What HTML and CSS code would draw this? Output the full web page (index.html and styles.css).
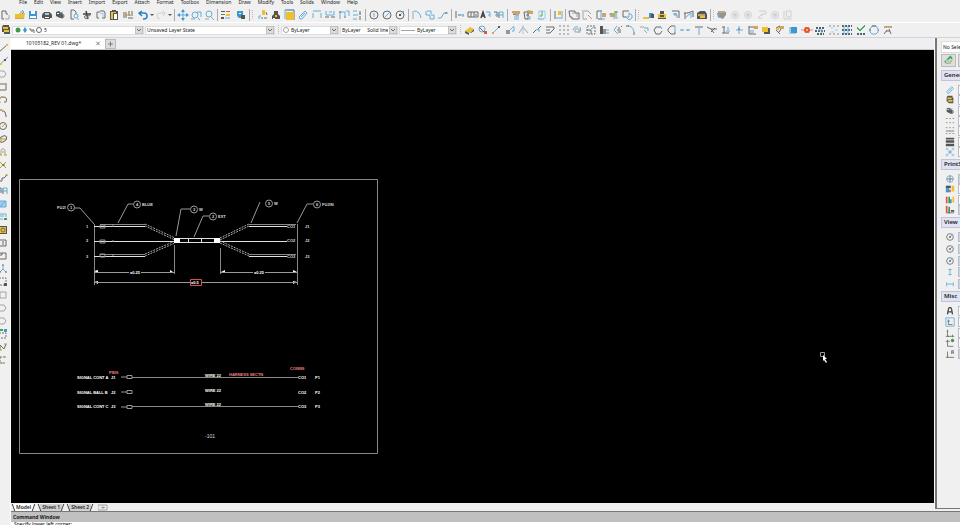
FILE: index.html
```html
<!DOCTYPE html>
<html lang="en">
<head>
<meta charset="utf-8">
<title>10105182_REV 01.dwg</title>
<link rel="stylesheet" href="styles.css">
</head>
<body>
<svg class="defs" aria-hidden="true">
<symbol id="new" viewBox="0 0 12 12"><path class="k" d="M6 2H2v8h2M6 2v3h2"/><path class="g" d="M9 6v4H5"/></symbol>
<symbol id="open" viewBox="0 0 12 12"><path class="fy" d="M1 5h4l1-1h5l-1 6H1z"/><path class="fo" d="M1 9h9v1H1z"/><path class="b" d="M6 3h3M8 1l2 2-2 2"/></symbol>
<symbol id="save" viewBox="0 0 12 12"><path class="fb" d="M2 2h8v8H2z"/><path class="fw" d="M4 2h4v3H4zM3 7h6v2H3z"/></symbol>
<symbol id="print" viewBox="0 0 12 12"><path class="fk" d="M3 3h6v1h1l1 2v3H9v1H3V9H1V6l1-2h1z"/><path class="fl" d="M4 4h4v2H4z"/><path class="fw" d="M4 8h4v1H4z"/></symbol>
<symbol id="preview" viewBox="0 0 12 12"><path class="fk" d="M2 3l3-1 4 3v4H6L2 7z"/><path class="fw" d="M3 4h2v1H3z"/><circle class="k" cx="8" cy="7" r="2"/><path class="b" d="M6 4l3-1"/></symbol>
<symbol id="pagefind" viewBox="0 0 12 12"><path class="k" d="M6 10H3V1h3l2 2v2"/><circle class="b" cx="8" cy="7" r="2"/><path class="g" d="M9 9l2 2"/></symbol>
<symbol id="cut" viewBox="0 0 12 12"><path class="k2" d="M2 5h8M5 2l2 8"/><circle class="k" cx="5" cy="8" r="1.500"/><circle class="k" cx="8" cy="6" r="1"/></symbol>
<symbol id="copy" viewBox="0 0 12 12"><path class="k" d="M4 9H2V3h3M5 2h4l1 2v5H7"/><path class="l" d="M5 5l3-1v4"/></symbol>
<symbol id="paste" viewBox="0 0 12 12"><path class="fk" d="M2 2h8v9H2z"/><path class="fy" d="M3 3h5v1H3zM3 4h2v6H3z"/><path class="fw" d="M6 5h3v5H6z"/><path class="fk" d="M4 1h4v2H4z"/></symbol>
<symbol id="match" viewBox="0 0 12 12"><path class="k" d="M2 3v6M4 3v6M6 9h5M7 2v5M10 2v5"/><path class="y" d="M3 6h6"/></symbol>
<symbol id="undo" viewBox="0 0 12 12"><path class="b2" d="M2 4h5q3 0 3 3t-3 3H6M5 2L2 4l3 3"/></symbol>
<symbol id="redo" viewBox="0 0 12 12"><path class="lg" d="M10 4H5Q2 4 2 7t3 3M8 2l2 2-2 3"/></symbol>
<symbol id="caret" viewBox="0 0 6 12"><path class="fk" d="M1 5h4L3 7z"/></symbol>
<symbol id="pan" viewBox="0 0 12 12"><path class="b" d="M2 6h8M6 2v8"/><path class="fb" d="M6 0l2 3H4zM6 12l2-3H4zM0 6l3-2v4zM12 6L9 4v4z"/></symbol>
<symbol id="zoomw" viewBox="0 0 12 12"><circle class="b" cx="5" cy="6" r="3"/><path class="b" d="M7 3h4v5M8 9l2 2"/><path class="g" d="M1 10h4"/></symbol>
<symbol id="zoom" viewBox="0 0 12 12"><circle class="b" cx="6" cy="5" r="3"/><path class="g" d="M8 8l3 3M2 10h4"/></symbol>
<symbol id="palette" viewBox="0 0 12 12"><path class="fk" d="M1 2h4v1H1zM1 8h3v2H1z"/><path class="fr" d="M6 2h4v1H6z"/><path class="fgn" d="M1 5h4v1H1z"/><path class="fy" d="M6 5h4v2H6z"/><path class="fl" d="M5 8h5v2H5z"/></symbol>
<symbol id="globe" viewBox="0 0 12 12"><path class="fb" d="M2 2h6v7H4L2 7z"/><path class="fk" d="M6 6h4v4H6z"/><path class="fw" d="M4 4h2v1H4z"/></symbol>
<symbol id="lamp" viewBox="0 0 12 12"><path class="fy" d="M5 1h3v5H5z"/><path class="b" d="M2 10V7h2"/><path class="k" d="M4 9h2M7 9h3M9 3l1 3"/></symbol>
<symbol id="eye" viewBox="0 0 12 12"><path class="fk" d="M4 2h4v3l2 2v3H2V7l2-2z"/><path class="fy" d="M5 6h2v2H5z"/><path class="fw" d="M3 9h2v1H3z"/></symbol>
<symbol id="note" viewBox="0 0 12 12"><path class="k" d="M1 1h9v10"/><path class="fy" d="M2 3h8v8H2z"/><path class="b" d="M1 1v9M3 1h7"/></symbol>
<symbol id="clip" viewBox="0 0 12 12"><path class="b" d="M2 8l6-6 2 2-5 6H3zM4 8l4-4"/></symbol>
<symbol id="dim1" viewBox="0 0 12 12"><path class="b" d="M2 2h8M2 4v5M10 4v5"/></symbol>
<symbol id="dim2" viewBox="0 0 12 12"><path class="b" d="M2 2v4h8V2M5 3h3"/><path class="k" d="M1 8h4M7 8h4"/></symbol>
<symbol id="dim3" viewBox="0 0 12 12"><path class="b" d="M2 10V3h5v4M8 2h3v5"/><path class="k" d="M1 3h2M6 8h2"/></symbol>
<symbol id="dim4" viewBox="0 0 12 12"><path class="b" d="M2 2h4M2 6h5M2 10h4"/><path class="k" d="M9 2v3M8 5h2M9 7v4"/></symbol>
<symbol id="circ" viewBox="0 0 12 12"><circle class="k" cx="6" cy="6" r="4"/><path class="b" d="M6 4v4"/></symbol>
<symbol id="diam" viewBox="0 0 12 12"><circle class="k" cx="6" cy="6" r="4"/><path class="b" d="M3 9l6-6"/></symbol>
<symbol id="rad" viewBox="0 0 12 12"><circle class="k" cx="6" cy="6" r="4"/><path class="b" d="M6 6l4-4"/><path class="fk" d="M5 5h2v2H5z"/></symbol>
<symbol id="arc" viewBox="0 0 12 12"><path class="b" d="M3 2q6 0 7 7"/><path class="g" d="M2 2v8"/></symbol>
<symbol id="leader" viewBox="0 0 12 12"><path class="b" d="M2 2v4h4v4h4V6H7M3 2h4v3"/></symbol>
<symbol id="curve" viewBox="0 0 12 12"><path class="b" d="M1 9h3l3-5h4"/><path class="k" d="M8 4h2"/></symbol>
<symbol id="step" viewBox="0 0 12 12"><path class="k" d="M2 9h3V6h2l3-3"/><path class="y" d="M8 3h3"/></symbol>
<symbol id="tol" viewBox="0 0 12 12"><path class="k" d="M2 2v7M4 6h3"/><path class="b" d="M7 6h3M9 5v3"/></symbol>
<symbol id="frame" viewBox="0 0 12 12"><path class="k" d="M1 3h10v5H1zM4 3v5M7 3v5M8 6h2"/></symbol>
<symbol id="atext" viewBox="0 0 12 12"><path class="k2" d="M1 9l2-6 2 6M2 7h3"/><path class="b" d="M6 3h4v5M8 6h2"/></symbol>
<symbol id="btext" viewBox="0 0 12 12"><path class="k" d="M1 3h3v5M6 3v6"/><path class="b" d="M6 3h4v6M2 6h8"/></symbol>
<symbol id="hand" viewBox="0 0 12 12"><path class="fo" d="M2 2h8v3H5L2 4z"/><path class="k" d="M3 5l3 1h3"/><path class="b" d="M4 8h5M4 10h5"/></symbol>
<symbol id="hand2" viewBox="0 0 12 12"><path class="fo" d="M4 1l6 1v3H6z"/><path class="k" d="M1 3h4v7H2zM3 6h3"/><path class="b" d="M7 7v3H4"/></symbol>
<symbol id="green" viewBox="0 0 12 12"><path class="l" d="M3 10V2h6v8"/><path class="gn" d="M6 2v5H4"/><path class="b" d="M2 10h6"/></symbol>
<symbol id="updown" viewBox="0 0 12 12"><path class="k" d="M2 2v8"/><path class="b" d="M3 9h5M9 2v8"/><path class="fy" d="M5 2h3v4H5z"/></symbol>
<symbol id="block" viewBox="0 0 12 12"><path class="k" d="M1 2h6v2h4v6H4V8H2z"/><path class="g" d="M4 4h5v4"/></symbol>
<symbol id="blockr" viewBox="0 0 12 12"><path class="g" d="M1 2h6l3 3M2 3v7h4"/><path class="r" d="M7 6l4 4"/></symbol>
<symbol id="blocky" viewBox="0 0 12 12"><path class="k" d="M2 10V2h5M3 10h4"/><path class="fo" d="M7 4h4v4H7z"/><path class="b" d="M6 1v9h4"/></symbol>
<symbol id="blockg" viewBox="0 0 12 12"><path class="fo" d="M2 4h5v4H2z"/><path class="b" d="M1 5h3M5 9h5"/><path class="gn" d="M8 2v6M6 3h4"/></symbol>
<symbol id="blockb" viewBox="0 0 12 12"><path class="k" d="M2 2h6M2 2v6h3"/><path class="b" d="M8 4v4H5l3 3 3-2V6z"/></symbol>
<symbol id="base" viewBox="0 0 12 12"><path class="fb" d="M6 4h4v5H6z"/><path class="fk" d="M8 5h3v4H8z"/><path class="fy" d="M0 8h6v2H0z"/></symbol>
<symbol id="box3" viewBox="0 0 12 12"><path class="fk" d="M4 2h4v3H4zM2 9h8v1H2z"/><path class="fy" d="M2 5h8v4H2z"/><path class="fk" d="M4 6h4v2H4z"/></symbol>
<symbol id="view2" viewBox="0 0 12 12"><path class="k" d="M2 2h7v7M4 5h3"/><path class="b" d="M4 4v2h3v3"/></symbol>
<symbol id="view3" viewBox="0 0 12 12"><path class="k" d="M2 10V4M1 4h4l5-2v6"/><path class="b" d="M3 8l5-4v5"/></symbol>
<symbol id="solid" viewBox="0 0 12 12"><path class="fk" d="M1 4l3-2h5l2 3v5H1z"/><path class="fo" d="M2 5h7v2H2z"/><path class="fy" d="M4 7h5v2H4z"/></symbol>
<symbol id="cube" viewBox="0 0 12 12"><path class="fg" d="M1 4l4-2 5 1v3l-3 4-5-2z"/><path class="fo" d="M2 2h7v2H2z"/><path class="b" d="M3 5v4"/></symbol>
<symbol id="gdot" viewBox="0 0 12 12"><circle class="lg" cx="6" cy="6" r="3.500"/><circle class="flg" cx="6" cy="6" r="2"/></symbol>
<symbol id="ghand" viewBox="0 0 12 12"><path class="lg" d="M3 2h7v3H6L2 9h4M6 5v2"/></symbol>
<symbol id="gpage" viewBox="0 0 12 12"><path class="lg" d="M2 2v8h8M4 2h5v6H5z"/></symbol>
<symbol id="layer" viewBox="0 0 12 12"><path class="fk" d="M3 1h6v2h1v7H4V8H2V3z"/><path class="fy" d="M3 3h5v2H3zM4 6h5v2H4z"/></symbol>
<symbol id="drop" viewBox="0 0 8 8"><path class="fs" d="M0 0h8v8H0z"/><path class="k" d="M2 3l2 2 2-2"/></symbol>
<symbol id="lights" viewBox="0 0 30 8"><circle class="fgn" cx="5" cy="4" r="2.500"/><path class="fb" d="M12 1l2 3-2 3-2-3z"/><path class="k" d="M17 2v2h4v3M19 4v2"/><circle class="k" cx="26" cy="4" r="2.500"/></symbol>
<symbol id="ring" viewBox="0 0 8 8"><circle class="g" cx="4" cy="4" r="2.500"/></symbol>
<symbol id="rule" viewBox="0 0 16 8"><path class="g" d="M1 4.500h14"/></symbol>
<symbol id="eraser" viewBox="0 0 12 12"><path class="fy" d="M2 7l5-4 4 2-5 4z"/><path class="fk" d="M2 7l4 2v2L2 9zM7 9l4-4v2L8 9z"/></symbol>
<symbol id="cpyred" viewBox="0 0 12 12"><circle class="b" cx="5" cy="5" r="3"/><path class="k" d="M2 3l5 5"/><path class="fr" d="M7 7h3v3H7z"/></symbol>
<symbol id="line" viewBox="0 0 12 12"><path class="b" d="M3 9l6-6"/><path class="fk" d="M8 2h2v2H8z"/><path class="fo" d="M2 8h2v2H2z"/></symbol>
<symbol id="mov" viewBox="0 0 12 12"><path class="fg" d="M2 6h4v4H2z"/><path class="b" d="M6 6l4-4M8 7h2V3"/></symbol>
<symbol id="mir" viewBox="0 0 12 12"><path class="g" d="M2 9l4-6 5 6"/><path class="l" d="M6 1v9"/></symbol>
<symbol id="str" viewBox="0 0 12 12"><path class="k" d="M2 9l3-3M7 5l3-3"/><path class="b" d="M5 6l3-1v3"/></symbol>
<symbol id="off" viewBox="0 0 12 12"><path class="k" d="M2 3h8v2L6 9H2M2 6h4"/></symbol>
<symbol id="grid" viewBox="0 0 12 12"><path class="d" d="M1 2h11M1 6h11M1 10h11"/></symbol>
<symbol id="rot" viewBox="0 0 12 12"><path class="b" d="M2 6q1-4 5-3M9 3q2 3-1 6"/><path class="g" d="M4 5h4v3H4z"/></symbol>
<symbol id="scale" viewBox="0 0 12 12"><path class="dk" d="M2 2h8v8H2V3"/><path class="k" d="M2 6h4v4"/><path class="b" d="M6 5l3-2"/></symbol>
<symbol id="align" viewBox="0 0 12 12"><path class="fk" d="M2 2h3v8H2z"/><path class="fg" d="M5 5h3v5H5z"/><path class="b" d="M8 6h3M8 9h3"/></symbol>
<symbol id="expl" viewBox="0 0 12 12"><path class="b" d="M5 2L2 6l4 4"/><path class="k" d="M6 4h2M5 6h4M6 8h3M9 3l1-1"/></symbol>
<symbol id="fil" viewBox="0 0 12 12"><path class="b" d="M3 2q5 0 6 6"/><path class="k" d="M1 2h3M9 8v3"/></symbol>
<symbol id="fil2" viewBox="0 0 12 12"><path class="b" d="M5 4h4v3"/><path class="g" d="M1 3h4M8 9l-3-3"/></symbol>
<symbol id="cir2" viewBox="0 0 12 12"><path class="k" d="M9 3H4L2 6l2 4h4l2-3"/><path class="b" d="M8 2l2 3"/></symbol>
<symbol id="cir3" viewBox="0 0 12 12"><path class="k" d="M9 2H5L2 5v2l3 3h4V8"/><path class="b" d="M9 2v6"/></symbol>
<symbol id="brk" viewBox="0 0 12 12"><path class="b" d="M1 6h4M7 6h4M3 5v2M9 5v2"/></symbol>
<symbol id="tee" viewBox="0 0 12 12"><path class="k" d="M2 3h8"/><path class="b" d="M6 4v7"/></symbol>
<symbol id="trim" viewBox="0 0 12 12"><path class="k" d="M1 3l4 2h6M5 5l3 4M5 8l4-4"/></symbol>
<symbol id="tool" viewBox="0 0 12 12"><path class="k" d="M2 3h3M4 3v6M2 9h7"/><path class="b" d="M6 7h4M8 3v3"/></symbol>
<symbol id="plus4" viewBox="0 0 12 12"><path class="b" d="M3 6h7M6 2v8"/><path class="k" d="M5 5h2"/></symbol>
<symbol id="note2" viewBox="0 0 12 12"><path class="k" d="M2 2v8h7M2 3h4"/><path class="fo" d="M5 2h6v3H7z"/><path class="fl" d="M3 6h4v3H3z"/></symbol>
<symbol id="ysq" viewBox="0 0 12 12"><path class="fk" d="M4 4h6v6H4z"/><path class="fy" d="M2 3h6v5H2z"/></symbol>
<symbol id="swatch" viewBox="0 0 12 12"><path class="fo" d="M4 2h6v3H6z"/><path class="k" d="M2 4l4-2M2 6l4 4M7 5l-2 3"/><path class="fy" d="M2 4h3v2H2z"/></symbol>
<symbol id="bsq" viewBox="0 0 12 12"><path class="fl" d="M2 3h7v7H2z"/><path class="fb" d="M4 3h6v6H4z"/></symbol>
<symbol id="burst" viewBox="0 0 12 12"><path class="r" d="M0 6h12M4 3l4 6M8 3L4 9"/><circle class="fr" cx="6" cy="6" r="3"/><path class="fy" d="M5 5h2v2H5z"/></symbol>
<symbol id="cloud" viewBox="0 0 12 12"><path class="dk2" d="M2 4h8M1 7h10M3 10h7"/><path class="b" d="M4 6h4v3"/></symbol>
<symbol id="grid2" viewBox="0 0 12 12"><path class="d" d="M1 2h11M1 10h11"/><path class="l" d="M3 4h2M7 6h3M3 8h3"/></symbol>
<symbol id="grid3" viewBox="0 0 12 12"><path class="dk2" d="M1 2h10M1 6h10M1 10h10"/><path class="b" d="M3 2v8M7 2v8"/></symbol>
<symbol id="check" viewBox="0 0 12 12"><path class="gn" d="M2 3l3 3 5-5M2 4l3 3 5-5"/><path class="dk2" d="M2 10h9"/></symbol>
<symbol id="gear" viewBox="0 0 12 12"><path class="b" d="M4 2h4l2 3v3l-2 2H4L2 8V5z"/><path class="k" d="M4 2h4M1 6h2M10 6h1"/></symbol>
<symbol id="tick" viewBox="0 0 12 12"><path class="fo" d="M4 2h6v2H6z"/><path class="k" d="M2 3h3M5 6l-3 4M7 5l2 5M4 7h4"/></symbol>
<symbol id="dline" viewBox="0 0 12 12"><path class="k" d="M1 11l10-9"/><path class="fy" d="M1 9h2v2H1zM9 2h2v2H9z"/></symbol>
<symbol id="xline" viewBox="0 0 12 12"><path class="b" d="M1 11l10-9"/><path class="fk" d="M7 4h2v2H7z"/><path class="fy" d="M3 8h2v2H3z"/></symbol>
<symbol id="hex" viewBox="0 0 12 12"><path class="g" d="M3 3h4l2 3-2 3H3"/></symbol>
<symbol id="rect" viewBox="0 0 12 12"><path class="k" d="M2 3h7v6H2z"/><path class="fo" d="M8 2h2v2H8zM1 8h3v2H1z"/></symbol>
<symbol id="vp" viewBox="0 0 12 12"><path class="k" d="M2 3h7v6H2M5 3v2H3"/></symbol>
<symbol id="arc1" viewBox="0 0 12 12"><path class="k" d="M3 9q-2-6 3-6t3 5H7"/><path class="fo" d="M7 7h2v2H7zM4 2h2v2H4z"/></symbol>
<symbol id="arc2" viewBox="0 0 12 12"><path class="k" d="M2 3h3q4 1 4 6"/><path class="fo" d="M8 8h2v2H8zM5 3h2v2H5z"/></symbol>
<symbol id="ell" viewBox="0 0 12 12"><circle class="k" cx="6" cy="6" r="3.500"/><path class="y" d="M5 7l4-4"/></symbol>
<symbol id="leaf" viewBox="0 0 12 12"><ellipse class="k" cx="6" cy="6" rx="4" ry="2.500" transform="rotate(-35 6 6)"/><path class="y" d="M4 6h5M4 9V5"/></symbol>
<symbol id="spl" viewBox="0 0 12 12"><path class="g" d="M4 9V4q2-3 4 0v5"/><path class="y" d="M3 9h2M7 9h3M5 6h2"/></symbol>
<symbol id="xpt" viewBox="0 0 12 12"><path class="y" d="M3 3l6 6M9 3L3 9"/><path class="k" d="M5 6h3"/></symbol>
<symbol id="hatch" viewBox="0 0 12 12"><path class="fl" d="M1 3h8v6H1z"/><path class="b" d="M3 9l5-6M1 3h8v6H1z"/></symbol>
<symbol id="img" viewBox="0 0 12 12"><path class="b" d="M2 3h7v3M2 8h4M3 5h4"/><path class="gn2" d="M7 8h3"/></symbol>
<symbol id="reg" viewBox="0 0 12 12"><path class="fk" d="M1 2h9v8H1z"/><path class="fy" d="M2 3h7v6H2z"/><circle class="k" cx="6" cy="6" r="2"/></symbol>
<symbol id="lst" viewBox="0 0 12 12"><path class="k" d="M1 3h8v6H1M5 5h2M5 7h2"/></symbol>
<symbol id="tri" viewBox="0 0 12 12"><path class="b" d="M6 2v4L3 9M6 6l3 3"/><path class="k" d="M2 9h2M8 9h2M5 2h2"/></symbol>
<symbol id="dotsq" viewBox="0 0 12 12"><path class="dk" d="M2 2h7v7H2z"/><path class="fk" d="M7 7h3v3H7z"/></symbol>
<symbol id="snap" viewBox="0 0 12 12"><path class="dk" d="M3 3h6M3 9h6M3 3v6"/><path class="y" d="M7 3h2M4 9h2"/></symbol>
<symbol id="sq" viewBox="0 0 12 12"><path class="g" d="M3 3h6v6H3z"/></symbol>
<symbol id="cyl" viewBox="0 0 12 12"><path class="dk" d="M2 5h7v5H2z"/><path class="gn2" d="M3 2h3"/><path class="fb" d="M7 1h3v3H7z"/></symbol>
<symbol id="nn" viewBox="0 0 12 12"><path class="k" d="M3 9V4l4 4 2-5"/><path class="y" d="M3 9h2M7 3h3"/></symbol>
<symbol id="cad" viewBox="0 0 12 12"><path class="gn2" d="M2 8l6-6 2 2"/><path class="y" d="M3 9h5l2-4"/><path class="fl" d="M3 5h5v3H3z"/></symbol>
<symbol id="lt1" viewBox="0 0 12 12"><path class="d" d="M1 3h11M1 8h11"/></symbol>
<symbol id="lt2" viewBox="0 0 12 12"><path class="d" d="M1 2h11M1 9h11"/><path class="k" d="M1 6h10"/></symbol>
<symbol id="lt3" viewBox="0 0 12 12"><path class="fk" d="M1 1h10v2H1zM1 4h10v3H1zM1 8h10v3H1z"/></symbol>
<symbol id="chk" viewBox="0 0 12 12"><path class="fl" d="M1 1h3v3H1zM8 1h3v3H8zM4 4h4v4H4zM1 8h3v3H1zM8 8h3v3H8z"/><path class="fg" d="M5 5h2v2H5z"/></symbol>
<symbol id="globe2" viewBox="0 0 12 12"><circle class="b" cx="6" cy="6" r="4"/><path class="k" d="M2 6h8M6 2v8"/></symbol>
<symbol id="ps1" viewBox="0 0 12 12"><path class="fk" d="M1 2h6v3H1z"/><path class="fb" d="M1 5h4v5H1z"/><path class="fy" d="M8 2h3v7H8z"/><path class="fr" d="M5 7h2v3H5z"/></symbol>
<symbol id="ps3" viewBox="0 0 12 12"><path class="fr" d="M1 2h2v8H1z"/><path class="fgn" d="M4 2h2v8H4z"/><path class="fb" d="M6 5h2v5H6z"/><path class="fy" d="M9 2h2v7H9z"/></symbol>
<symbol id="ps2" viewBox="0 0 12 12"><path class="fr" d="M1 1h2v9H1z"/><path class="fgn" d="M4 2h2v8H4z"/><path class="fk" d="M7 6h4v2H7zM3 9h8v1H3z"/></symbol>
<symbol id="tv" viewBox="0 0 12 12"><path class="b" d="M4 3h4M6 2v8M4 9h4"/></symbol>
<symbol id="th" viewBox="0 0 12 12"><path class="b" d="M2 4v5M2 6h8M10 4v5"/></symbol>
<symbol id="abold" viewBox="0 0 12 12"><path class="k2" d="M3 10l1-6 1-2h2l1 2 1 6M4 7h4"/></symbol>
<symbol id="ucs" viewBox="0 0 12 12"><path class="k" d="M3 2v8h8M1 10h4M2 4h2M9 8v3"/></symbol>
<symbol id="ucsb" viewBox="0 0 12 12"><path class="b" d="M1 1h10v10H1z"/><path class="k" d="M4 3v6h5M3 5h3"/></symbol>
<symbol id="ucsg" viewBox="0 0 12 12"><path class="k" d="M3 2v8h7M1 4h5"/><circle class="fgn" cx="9" cy="3" r="2"/></symbol>
<symbol id="ucsa" viewBox="0 0 12 12"><path class="k" d="M3 3v7h8M1 10h3M8 6V2h2v4M8 4h2"/></symbol>
</svg>

<nav class="menu">
<a href="#">File</a><a href="#">Edit</a><a href="#">View</a><a href="#">Insert</a><a href="#">Import</a><a href="#">Export</a><a href="#">Attach</a><a href="#">Format</a><a href="#">Toolbox</a><a href="#">Dimension</a><a href="#">Draw</a><a href="#">Modify</a><a href="#">Tools</a><a href="#">Solids</a><a href="#">Window</a><a href="#">Help</a>
</nav>

<div class="bar">
<div class="group g-file"><button aria-label="New"><svg><use href="#new"/></svg></button><button aria-label="Open"><svg><use href="#open"/></svg></button><button aria-label="Save"><svg><use href="#save"/></svg></button><button aria-label="Print"><svg><use href="#print"/></svg></button><button aria-label="Preview"><svg><use href="#preview"/></svg></button><button aria-label="Find"><svg><use href="#pagefind"/></svg></button><button aria-label="Cut"><svg><use href="#cut"/></svg></button><button aria-label="Copy"><svg><use href="#copy"/></svg></button><button aria-label="Paste"><svg><use href="#paste"/></svg></button><button aria-label="Match properties"><svg><use href="#match"/></svg></button></div>
<div class="group sep g-undo"><button aria-label="Undo"><svg><use href="#undo"/></svg></button><button class="slim" aria-label="Undo list"><svg><use href="#caret"/></svg></button><button aria-label="Redo"><svg><use href="#redo"/></svg></button><button class="slim" aria-label="Redo list"><svg><use href="#caret"/></svg></button></div>
<div class="group sep g-three"><button aria-label="Pan"><svg><use href="#pan"/></svg></button><button aria-label="Zoom window"><svg><use href="#zoomw"/></svg></button><button aria-label="Zoom"><svg><use href="#zoom"/></svg></button></div>
<div class="group sep g-two"><button aria-label="Palettes"><svg><use href="#palette"/></svg></button><button aria-label="Web"><svg><use href="#globe"/></svg></button></div>
<i class="grip"></i>
<div class="group sep g-eight"><button aria-label="Light"><svg><use href="#lamp"/></svg></button><button aria-label="Observe"><svg><use href="#eye"/></svg></button><button aria-label="Note"><svg><use href="#note"/></svg></button><button aria-label="Attach"><svg><use href="#clip"/></svg></button><button aria-label="Linear"><svg><use href="#dim1"/></svg></button><button aria-label="Continue"><svg><use href="#dim2"/></svg></button><button aria-label="Baseline"><svg><use href="#dim3"/></svg></button><button aria-label="Ordinate"><svg><use href="#dim4"/></svg></button></div>
<div class="group sep g-three"><button aria-label="Center"><svg><use href="#circ"/></svg></button><button aria-label="Diameter"><svg><use href="#diam"/></svg></button><button aria-label="Radius"><svg><use href="#rad"/></svg></button></div>
<div class="group sep g-three"><button aria-label="Angle"><svg><use href="#arc"/></svg></button><button aria-label="Jog"><svg><use href="#leader"/></svg></button><button aria-label="Leader"><svg><use href="#curve"/></svg></button></div>
<div class="group sep g-four"><button aria-label="Tolerance"><svg><use href="#tol"/></svg></button><button aria-label="Frame"><svg><use href="#frame"/></svg></button><button aria-label="Text"><svg><use href="#atext"/></svg></button><button aria-label="Edit text"><svg><use href="#btext"/></svg></button></div>
<div class="group sep g-three"><button aria-label="Style"><svg><use href="#hand"/></svg></button><button aria-label="Edit style"><svg><use href="#hand2"/></svg></button><button aria-label="Update"><svg><use href="#green"/></svg></button></div>
<div class="group sep g-one"><button aria-label="Override"><svg><use href="#updown"/></svg></button></div>
<div class="group sep g-five"><button aria-label="Block"><svg><use href="#block"/></svg></button><button aria-label="Detach"><svg><use href="#blockr"/></svg></button><button aria-label="Insert block"><svg><use href="#blocky"/></svg></button><button aria-label="Define block"><svg><use href="#blockg"/></svg></button><button aria-label="Edit block"><svg><use href="#blockb"/></svg></button></div>
<i class="grip"></i>
<div class="group sep g-five"><button aria-label="Base"><svg><use href="#base"/></svg></button><button aria-label="Box"><svg><use href="#box3"/></svg></button><button aria-label="Layout"><svg><use href="#view2"/></svg></button><button aria-label="Project"><svg><use href="#view3"/></svg></button><button aria-label="Solid"><svg><use href="#solid"/></svg></button></div>
<i class="grip"></i>
<div class="group g-six"><button aria-label="Cube"><svg><use href="#cube"/></svg></button><button aria-label="Record" disabled><svg><use href="#gdot"/></svg></button><button aria-label="Stop" disabled><svg><use href="#gdot"/></svg></button><button aria-label="Pick" disabled><svg><use href="#ghand"/></svg></button><button aria-label="Play" disabled><svg><use href="#gdot"/></svg></button><button aria-label="Sheet" disabled><svg><use href="#gpage"/></svg></button></div>
</div>

<div class="bar bar-two">
<button aria-label="Layers"><svg><use href="#layer"/></svg></button>
<label class="combo c-layer"><svg class="lights"><use href="#lights"/></svg><select aria-label="Layer"><option>5</option></select><svg class="drop"><use href="#drop"/></svg></label>
<label class="combo c-state"><select aria-label="Layer state"><option>Unsaved Layer State</option></select><svg class="drop"><use href="#drop"/></svg></label>
<i class="grip"></i>
<label class="combo c-prop"><svg class="ring"><use href="#ring"/></svg><select aria-label="Colour"><option>ByLayer</option></select><svg class="drop"><use href="#drop"/></svg></label>
<label class="combo c-prop"><select aria-label="Line style"><option>ByLayer&nbsp;&nbsp;&nbsp;&nbsp;&nbsp;Solid line</option></select><svg class="drop"><use href="#drop"/></svg></label>
<label class="combo c-prop"><svg class="rule"><use href="#rule"/></svg><select aria-label="Line weight"><option>ByLayer</option></select><svg class="drop"><use href="#drop"/></svg></label>
<i class="grip"></i>
<div class="group g-modify"><button aria-label="Erase"><svg><use href="#eraser"/></svg></button><button aria-label="Copy entity"><svg><use href="#cpyred"/></svg></button><button aria-label="Line"><svg><use href="#line"/></svg></button><button aria-label="Move"><svg><use href="#mov"/></svg></button><button aria-label="Mirror"><svg><use href="#mir"/></svg></button><button aria-label="Stretch"><svg><use href="#str"/></svg></button><button aria-label="Offset"><svg><use href="#off"/></svg></button><button aria-label="Pattern"><svg><use href="#grid"/></svg></button><button aria-label="Rotate"><svg><use href="#rot"/></svg></button><button aria-label="Scale"><svg><use href="#scale"/></svg></button><button aria-label="Align"><svg><use href="#align"/></svg></button><button aria-label="Explode"><svg><use href="#expl"/></svg></button><button aria-label="Fillet"><svg><use href="#fil"/></svg></button><button aria-label="Chamfer"><svg><use href="#fil2"/></svg></button><button aria-label="Close"><svg><use href="#cir2"/></svg></button><button aria-label="Join"><svg><use href="#cir3"/></svg></button><button aria-label="Split"><svg><use href="#brk"/></svg></button><button aria-label="Extend"><svg><use href="#tee"/></svg></button><button aria-label="Trim"><svg><use href="#trim"/></svg></button><button aria-label="Power trim"><svg><use href="#tool"/></svg></button><button aria-label="Weld"><svg><use href="#plus4"/></svg></button><button aria-label="Edit annotation"><svg><use href="#note2"/></svg></button><button aria-label="Order"><svg><use href="#ysq"/></svg></button><button aria-label="Edit hatch"><svg><use href="#swatch"/></svg></button><button aria-label="Front"><svg><use href="#bsq"/></svg></button><button aria-label="Burst"><svg><use href="#burst"/></svg></button><button aria-label="Group"><svg><use href="#cloud"/></svg></button><button aria-label="Ungroup"><svg><use href="#grid2"/></svg></button><button aria-label="Array"><svg><use href="#grid3"/></svg></button><button aria-label="Accept"><svg><use href="#check"/></svg></button><button aria-label="Regenerate"><svg><use href="#gear"/></svg></button><button aria-label="Edit polyline"><svg><use href="#tick"/></svg></button></div>
</div>

<div class="work">
<aside class="tools"><button aria-label="Line"><svg><use href="#dline"/></svg></button><button aria-label="Infinite line"><svg><use href="#xline"/></svg></button><button aria-label="Polygon"><svg><use href="#hex"/></svg></button><button aria-label="Rectangle"><svg><use href="#rect"/></svg></button><button aria-label="Arc"><svg><use href="#arc1"/></svg></button><button aria-label="Three point arc"><svg><use href="#arc2"/></svg></button><button aria-label="Circle"><svg><use href="#ell"/></svg></button><button aria-label="Ellipse"><svg><use href="#leaf"/></svg></button><button aria-label="Spline"><svg><use href="#spl"/></svg></button><button aria-label="Point"><svg><use href="#xpt"/></svg></button><button aria-label="Polyline"><svg><use href="#step"/></svg></button><button aria-label="Block"><svg><use href="#btext"/></svg></button><button aria-label="Hatch"><svg><use href="#hatch"/></svg></button><button aria-label="Image"><svg><use href="#img"/></svg></button><button aria-label="Region"><svg><use href="#reg"/></svg></button><button aria-label="Table"><svg><use href="#lst"/></svg></button><button aria-label="Viewport"><svg><use href="#vp"/></svg></button><button aria-label="Mesh"><svg><use href="#tri"/></svg></button><button aria-label="Mask"><svg><use href="#dotsq"/></svg></button><button aria-label="Square"><svg><use href="#sq"/></svg></button><button aria-label="Round viewport"><svg><use href="#hex"/></svg></button><button aria-label="Cloud"><svg><use href="#hex"/></svg></button><button aria-label="Boundary"><svg><use href="#cyl"/></svg></button><button aria-label="Freehand"><svg><use href="#nn"/></svg></button><button aria-label="Snap"><svg><use href="#snap"/></svg></button></aside>

<div class="center">
<div class="upper">
<main class="doc">
<div class="tabs"><a class="tab" href="#">10105182_REV 01.dwg*</a><button class="close" aria-label="Close"><svg viewBox="0 0 8 8"><path class="k" d="M2 2l4 4M6 2L2 6"/></svg></button><button class="add" aria-label="New tab"><svg viewBox="0 0 10 10"><path class="k" d="M2 5h6M5 2v6"/></svg></button></div>
<div class="canvas">
<svg class="drawing" role="img" aria-label="Cable drawing">
<g transform="translate(-11 -50)">
<path class="w3" d="M19.500 179.500h358v274h-358z"/>
<g class="w2">
<path d="M74 208h6l14 16M118 223l10-19h5M176 236l5-27h9M194 237l9-21h6M251 223l9-21M297 223l10-19h6"/>
<circle cx="71" cy="207.500" r="3.500"/><circle cx="137" cy="204.500" r="3.500"/><circle cx="194" cy="209.500" r="3.500"/><circle cx="213" cy="216.500" r="3.500"/><circle cx="269" cy="203.500" r="3.500"/><circle cx="317" cy="204.500" r="3.500"/>
</g>
<path class="w3" d="M94.500 224v61M174.500 245v29M220.500 248v26M297.500 224v61"/>
<path class="w1" d="M94 226.500h51M94 241.500h81M94 256.500h51M249 226.500h38M220 241.500h67M249 256.500h38"/>
<path class="w3" d="M100 224.500h45M100 254.500h45M249 224.500h47M249 254.500h47"/>
<path class="dash" d="M145 224l30 14M145 226l30 14M145 254l30-13M145 256l30-13M220 238l29-14M220 240l29-14M220 241l29 13M220 243l29 13"/>
<path class="w2" d="M100 225h5v3h-5zM100 240h5v3h-5zM100 254h5v3h-5zM113 225v2M113 240v2M113 254v2"/>
<path class="w1" d="M180 238.500h35M180 242.500h35M188.500 238v5M201.500 238v5"/>
<path class="solid" d="M174 238h6v5h-6zM214 238h6v5h-6zM94 271l4-1v3zM173 272l-3-2v3zM221 272l4-2v3zM297 272l-4-2v3zM94 282l4-1v3zM297 282l-4-1v3z"/>
<path class="w2" d="M94 272.500h35M141 272.500h33M220 272.500h33M265 272.500h32M94 282.500h96M202 282.500h95"/>
<path class="red" d="M190.500 279.500h11v6h-11z"/>
<g class="lbl">
<text x="57" y="209">FUJI</text><text x="70" y="209">1</text><text x="136" y="206">4</text><text x="142" y="206">BLUE</text><text x="193" y="211">3</text><text x="199" y="211">W</text><text x="212" y="218">2</text><text x="218" y="218">EXT</text><text x="268" y="205">5</text><text x="274" y="205">W</text><text x="316" y="206">6</text><text x="322" y="206">FUJIN</text>
<text x="86" y="228">1</text><text x="86" y="242">2</text><text x="86" y="258">3</text><text x="305" y="228">J1</text><text x="305" y="242">J2</text><text x="305" y="258">J3</text>
<text x="287" y="228">CO1</text><text x="287" y="242">CO2</text><text x="287" y="258">CO3</text>
<text class="hi" x="130" y="274">±0.25</text><text class="hi" x="254" y="274">±0.25</text><text class="hi" x="191" y="284">±0.5</text>
<text class="hi" x="77" y="379">SIGNAL CONT A</text><text class="hi" x="77" y="394">SIGNAL BALL B</text><text class="hi" x="77" y="408">SIGNAL CONT C</text>
<text class="hi" x="111" y="379">J1</text><text class="hi" x="111" y="394">J2</text><text class="hi" x="111" y="408">J3</text>
<text class="hi" x="205" y="377">WIRE 22</text><text class="hi" x="205" y="392">WIRE 22</text><text class="hi" x="205" y="406">WIRE 22</text>
<text class="hi" x="298" y="379">CO1</text><text class="hi" x="298" y="394">CO2</text><text class="hi" x="298" y="408">CO3</text>
<text class="hi" x="315" y="379">P1</text><text class="hi" x="315" y="394">P2</text><text class="hi" x="315" y="408">P3</text>
<text class="pink" x="109" y="374">PINS</text><text class="pink" x="229" y="376">HARNESS SECTN</text><text class="pink" x="290" y="370">CONNS</text>
<text class="num" x="205" y="438">-101</text>
</g>
<path class="w3" d="M132 377.500h166M132 406.500h166"/>
<path class="w2" d="M121 377h6M121 392h6M121 407h6M127 375.500h5v3h-5zM127 390.500h5v3h-5zM127 405.500h5v3h-5z"/>
<path class="w2" d="M820.500 352.500h4v4h-4z"/><path class="solid" d="M823 355v6l1-1 2 3 1-1-2-3h2z"/>
</g>
</svg>
</div>
<div class="sheets"><a class="sheet on" href="#">Model</a><a class="sheet" href="#">Sheet 1</a><a class="sheet" href="#">Sheet 2</a><button aria-label="Add sheet"><svg viewBox="0 0 10 7"><path class="g" d="M0 1h9v5H0zM3 3.500h4M5 2v3"/></svg></button></div>
</main>

<aside class="panel">
<input class="selection" aria-label="Selection" value="No Selection" readonly>
<div class="ptools"><button aria-label="CAD properties"><svg><use href="#cad"/></svg></button><button aria-label="Filter"></button></div>
<section class="s-general"><h2>General</h2><ul><li><svg><use href="#clip"/></svg><span></span></li><li><svg><use href="#layer"/></svg><span></span></li><li><svg><use href="#preview"/></svg><span></span></li><li><svg><use href="#lt1"/></svg><span></span></li><li><svg><use href="#lt2"/></svg><span></span></li><li><svg><use href="#lt3"/></svg><span></span></li><li><svg><use href="#chk"/></svg><span></span></li></ul></section>
<section class="s-print"><h2>PrintStyle</h2><ul><li><svg><use href="#globe2"/></svg><span class="ro"></span></li><li><svg><use href="#ps1"/></svg><span></span></li><li><svg><use href="#ps3"/></svg><span></span></li><li><svg><use href="#ps2"/></svg><span class="ro"></span></li></ul></section>
<section class="s-view"><h2>View</h2><ul><li><svg><use href="#rad"/></svg><span class="ro"></span></li><li><svg><use href="#rad"/></svg><span class="ro"></span></li><li><svg><use href="#rad"/></svg><span class="ro"></span></li><li><svg><use href="#tv"/></svg><span class="ro"></span></li><li><svg><use href="#th"/></svg><span class="ro"></span></li></ul></section>
<section class="s-misc"><h2>Misc</h2><ul><li><svg><use href="#abold"/></svg><span></span></li><li><svg><use href="#ucsb"/></svg><span></span></li><li><svg><use href="#ucs"/></svg><span></span></li><li><svg><use href="#ucsg"/></svg><span></span></li><li><svg><use href="#ucsa"/></svg><span class="ro"></span></li></ul></section>
</aside>
</div>
<footer class="command"><h2>Command Window</h2><p>Specify lower left corner:</p></footer>
</div>
</div>
</body>
</html>
```
FILE: styles.css
```css
* { box-sizing: border-box; }
body {
  margin: 0; height: 100vh; overflow: hidden; display: flex; flex-direction: column;
  background: #f0f0f0; color: #222; font: 5px/7px "Noto Sans", "Open Sans", sans-serif;
}
.defs { position: absolute; width: 0; height: 0; }
button { appearance: none; border: 0; padding: 0; background: none; width: 12px; height: 12px; flex: none; }
button svg { display: block; width: 100%; height: 100%; }
a { color: inherit; text-decoration: none; }
h2, p, ul { margin: 0; padding: 0; font-size: inherit; }

.k, .k2, .g, .lg, .b, .b2, .l, .y, .r, .gn, .gn2, .d, .dk, .dk2 { fill: none; stroke-width: 1; }
.k { stroke: #6a6a6a; }
.k2 { stroke: #444; stroke-width: 1.5; }
.g { stroke: #a4a4a4; }
.lg { stroke: #d0d0d0; }
.b { stroke: #62addb; }
.b2 { stroke: #2485c8; stroke-width: 1.5; }
.l { stroke: #9ccbe8; }
.y { stroke: #b99b28; }
.r { stroke: #e08878; }
.gn { stroke: #48a860; }
.gn2 { stroke: #3aa84a; stroke-width: 2; }
.d { stroke: #888; stroke-dasharray: 2 2; }
.dk { stroke: #777; stroke-dasharray: 2 1; }
.dk2 { stroke: #4a6675; stroke-width: 2; stroke-dasharray: 2 1; }
.fk { fill: #555; }
.fg { fill: #8e979e; }
.flg { fill: #d0d0d0; }
.fw { fill: #fff; }
.fb { fill: #3c98d0; }
.fl { fill: #a6cde6; }
.fy { fill: #ecc030; }
.fo { fill: #cda468; }
.fr { fill: #e2523c; }
.fgn { fill: #3f9a4c; }
.fs { fill: #dcdcdc; stroke: #aaa; }

.menu { display: flex; gap: 7px; height: 8px; padding-left: 19px; line-height: 5px; flex: none; }
.bar { display: flex; align-items: center; height: 15px; border-bottom: 1px solid #fff; flex: none; white-space: nowrap; }
.bar-two { border-bottom: 1px solid #d4d4d8; }
.group { display: flex; justify-content: space-between; align-items: center; height: 12px; padding: 0 2px; flex: none; }
.sep { border-right: 1px solid #aaa; }
.slim { width: 6px; }
.grip { width: 5px; height: 10px; flex: none; border: solid #f0f0f0; border-width: 0 2px; background: repeating-linear-gradient(#bbb 0 1px, #f0f0f0 1px 2px); }
.g-file { width: 135px; padding: 0 1px 0 0; }
.g-undo { width: 40px; }
.g-three { width: 43px; }
.g-two { width: 32px; }
.g-eight { width: 111px; }
.g-four { width: 56px; }
.g-one { width: 15px; }
.g-five { width: 70px; }
.g-six { width: 78px; padding: 0; }
.g-modify { width: 431px; padding: 0; }

.combo { display: flex; align-items: center; height: 9px; flex: none; background: #fff; border: 1px solid #ddd; margin-right: 1px; }
.combo select { appearance: none; flex: 1; min-width: 0; height: 7px; border: 0; padding: 0 1px; background: none; font: inherit; color: inherit; }
.combo svg { flex: none; height: 8px; }
.drop, .ring { width: 8px; }
.lights { width: 30px; }
.rule { width: 16px; }
.c-layer { width: 132px; }
.c-state { width: 130px; }
.c-prop { width: 58px; }

.work { display: flex; flex: 1; min-height: 0; }
.tools { width: 11px; flex: none; display: flex; flex-direction: column; gap: 1px; padding-top: 4px; overflow: hidden; border-right: 1px solid #fafafa; }
.tools button { margin-left: -3px; }
.center { flex: 1; min-width: 0; display: flex; flex-direction: column; }
.upper { flex: 1; min-height: 0; display: flex; }
.doc { flex: 1; min-width: 0; display: flex; flex-direction: column; border-right: 1px solid #fafafa; }
.tabs { display: flex; align-items: center; height: 12px; flex: none; background: #efeff1; border-bottom: 1px solid #ccc; }
.tab { width: 80px; height: 11px; padding-left: 15px; background: #fff; line-height: 10px; }
.close { width: 14px; height: 11px; padding: 2px 3px; background: #fff; }
.add { width: 11px; height: 10px; background: #dcdcdc; border: 1px solid #bbb; }
.canvas { flex: 1; min-height: 0; background: #000; }
.drawing { display: block; width: 100%; height: 100%; }
.w1, .w2, .w3, .dash, .red { fill: none; stroke-width: 1; }
.w1 { stroke: #e0e0e0; }
.w2 { stroke: #999; }
.w3 { stroke: #888; }
.dash { stroke: #aaa; stroke-dasharray: 2 1; }
.red { stroke: #d05050; }
.solid { fill: #fff; }
.lbl { fill: #ddd; font: bold 4px "Liberation Sans", sans-serif; }
.hi { fill: #fff; }
.pink { fill: #f08080; }
.lbl .num { font-size: 5px; font-weight: normal; }

.sheets { display: flex; align-items: center; height: 8px; flex: none; background: #f0f0f0; }
.sheet { position: relative; height: 7px; padding: 0 5px; margin-right: 1px; line-height: 7px; background: linear-gradient(#d0d0d0, #d0d0d0) center / calc(100% - 6px) 100% no-repeat; font-weight: 600; }
.sheet.on { background-image: linear-gradient(#fff, #fff); }
.sheet::before, .sheet::after { content: ""; position: absolute; top: 0; width: 1px; height: 7px; background: #444; }
.sheet::before { left: 2px; transform: skewX(20deg); }
.sheet::after { right: 2px; transform: skewX(-20deg); }
.sheets button { width: 10px; height: 7px; margin-left: 3px; }

.panel { width: 25px; flex: none; overflow: hidden; border-left: 2px solid #777; border-bottom: 1px solid #777; padding: 3px 0 0 4px; margin-bottom: 2px; }
.selection { display: block; width: 60px; height: 12px; border: 1px solid #ddd; padding: 0 1px; margin: 0; background: #fff; font: inherit; color: inherit; }
.ptools { display: flex; gap: 2px; width: 40px; height: 17px; padding: 1px 0; }
.ptools button { width: 15px; height: 13px; background: #dbe0de; border: 1px solid #bbb; }
.panel section { display: flex; flex-direction: column; width: 60px; }
.panel h2 { height: 11px; flex: none; padding-left: 2px; font-size: 6px; line-height: 9px; background: #dfe3f3; border: 1px solid #c0c4d8; font-weight: 600; }
.panel ul { flex: 1; min-height: 0; display: flex; flex-direction: column; justify-content: space-between; padding: 4px 0 2px 4px; list-style: none; }
.panel li { display: flex; gap: 3px; height: 10px; }
.panel li svg { width: 10px; height: 10px; flex: none; }
.panel li span { flex: 1; background: #fafafa; border: 1px solid #b8bcc4; }
.panel li .ro { background: #c8d4ea; }
.s-general { height: 89px; }
.s-print { height: 58px; }
.s-view { height: 74px; }
.s-misc { height: 70px; }

.command { height: 14px; flex: none; border-top: 1px solid #777; background: #fff; overflow: hidden; }
.command h2 { height: 10px; padding-left: 2px; line-height: 10px; background: #c0c0c0; font-weight: 700; }
.command p { padding-left: 3px; line-height: 5px; color: #000; }
```
